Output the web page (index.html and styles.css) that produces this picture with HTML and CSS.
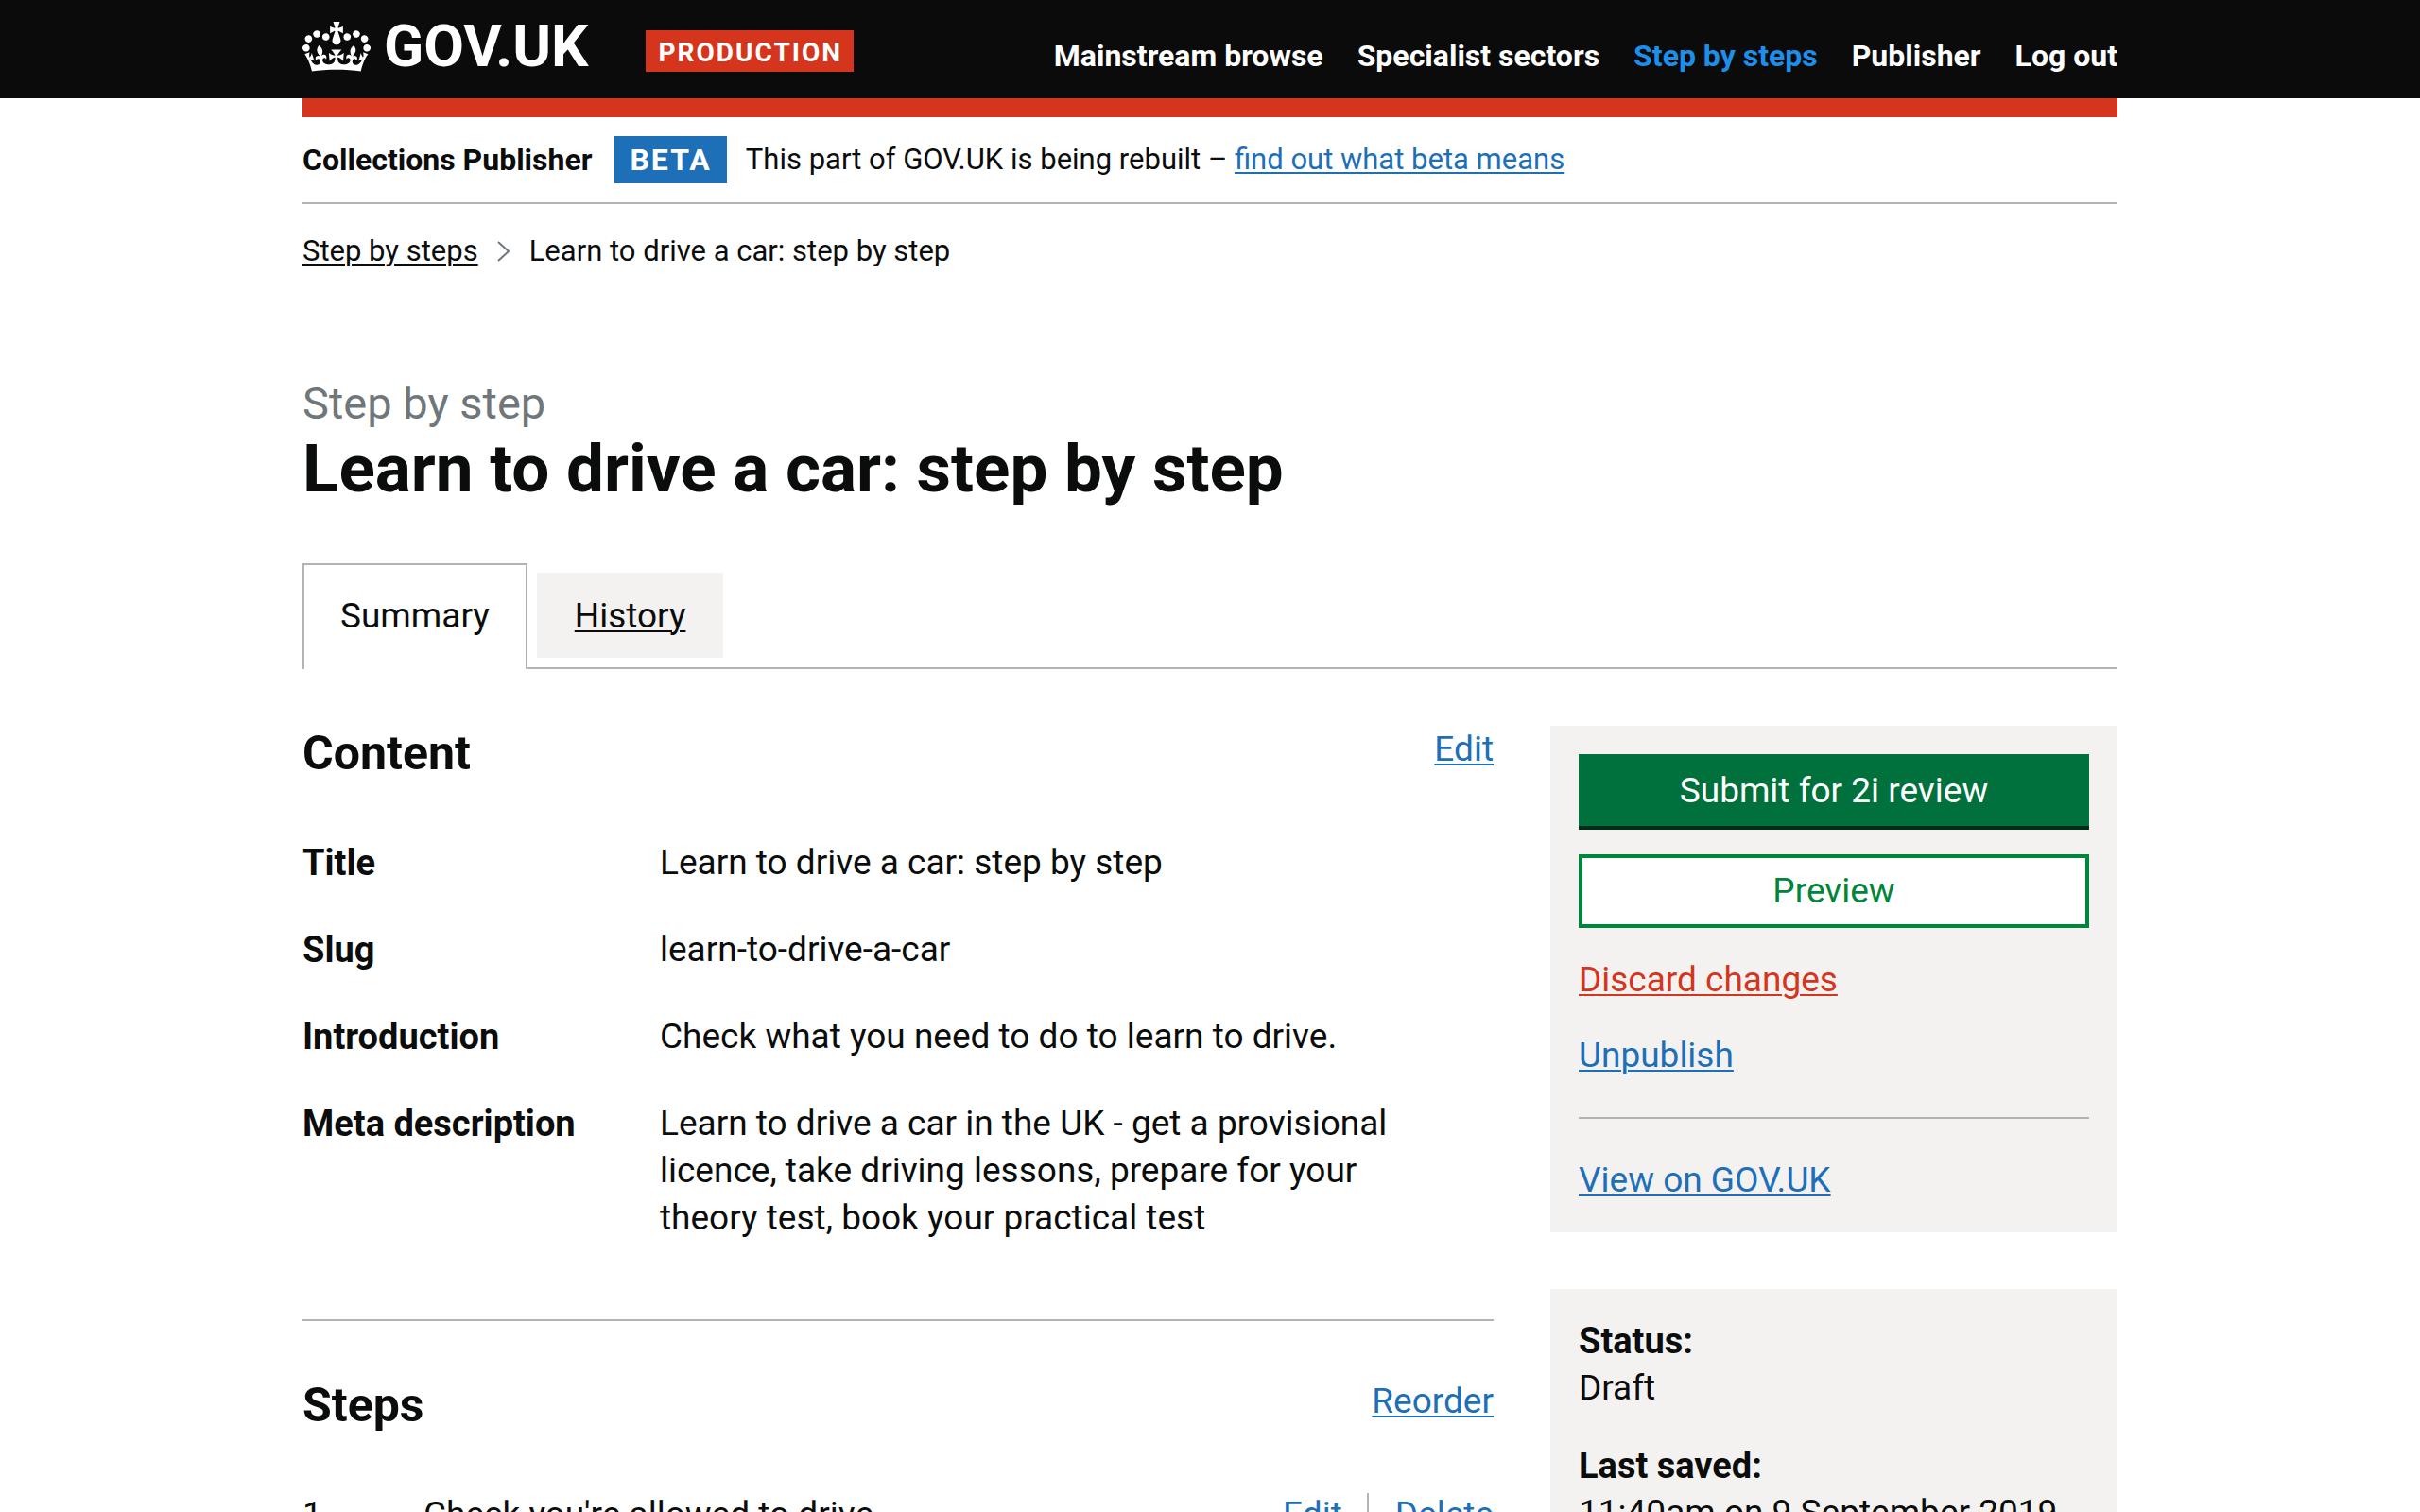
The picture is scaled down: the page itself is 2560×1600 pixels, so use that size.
FILE: index.html
```html
<!DOCTYPE html>
<html lang="en">
<head>
<meta charset="utf-8">
<meta name="viewport" content="width=device-width, initial-scale=1">
<title>Learn to drive a car: step by step</title>
<link rel="stylesheet" href="styles.css">
</head>
<body>
<header class="header">
  <div class="container header__inner">
    <a class="logo" href="#">
      <svg class="logo__crown" viewBox="0 0 132 97" aria-hidden="true"><path fill="currentColor" fill-rule="evenodd" d="M25 30.2c3.5 1.5 7.7-.2 9.1-3.7 1.5-3.6-.2-7.8-3.9-9.2-3.6-1.4-7.6.3-9.1 3.9-1.4 3.5.3 7.5 3.9 9zM9 39.5c3.6 1.5 7.8-.2 9.2-3.7 1.5-3.6-.2-7.8-3.9-9.1-3.6-1.5-7.6.2-9.1 3.8-1.4 3.5.3 7.5 3.8 9zM4.4 57.2c3.5 1.5 7.7-.2 9.1-3.8 1.5-3.6-.2-7.7-3.9-9.1-3.5-1.5-7.6.3-9.1 3.8-1.4 3.5.3 7.6 3.9 9.1zm38.3-21.4c3.5 1.5 7.7-.2 9.1-3.8 1.5-3.6-.2-7.7-3.9-9.1-3.6-1.5-7.6.3-9.1 3.8-1.3 3.6.4 7.7 3.9 9.1zm64.4-5.6c-3.6 1.5-7.8-.2-9.1-3.7-1.5-3.6.2-7.8 3.8-9.2 3.6-1.4 7.7.3 9.2 3.9 1.3 3.5-.4 7.5-3.9 9zm15.9 9.3c-3.6 1.5-7.7-.2-9.1-3.7-1.5-3.6.2-7.8 3.7-9.1 3.6-1.5 7.7.2 9.2 3.8 1.5 3.5-.3 7.5-3.8 9zm4.7 17.7c-3.6 1.5-7.8-.2-9.2-3.8-1.5-3.6.2-7.7 3.9-9.1 3.6-1.5 7.7.3 9.2 3.8 1.3 3.5-.4 7.6-3.9 9.1zM89.3 35.8c-3.6 1.5-7.8-.2-9.2-3.8-1.4-3.6.2-7.7 3.9-9.1 3.6-1.5 7.7.3 9.2 3.8 1.4 3.6-.3 7.7-3.9 9.1zM69.7 17.7l8.9 4.7V9.3l-8.9 2.8c-.2-.3-.5-.6-.9-.9L72.4 0H59.6l3.5 11.2c-.3.3-.6.5-.9.9l-8.8-2.8v13.1l8.8-4.7c.3.3.6.7.9.9l-5 15.4v.1c-.2.8-.4 1.6-.4 2.4 0 4.1 3.1 7.5 7 8.1h.2c.3 0 .7.1 1 .1.4 0 .7 0 1-.1h.2c4-.6 7.1-4.1 7.1-8.1 0-.8-.1-1.7-.4-2.4V34l-5.1-15.4c.4-.2.7-.6 1-.9zM66 92.8c16.9 0 32.8 1.1 47.1 3.2 4-16.9 8.9-26.7 14-33.5l-9.6-3.4c1 4.9 1.1 7.2 0 10.2-1.5-1.4-3-4.3-4.2-8.7L108.6 76c2.8-2 5-3.2 7.5-3.3-4.4 9.4-10 11.9-13.6 11.2-4.3-.8-6.3-4.6-5.6-7.9 1-4.7 5.7-5.9 8-.5 4.3-8.7-3-11.4-7.6-8.8 7.1-7.2 7.9-13.5 2.1-21.1-8 6.1-8.1 12.3-4.5 20.8-4.7-5.4-12.1-2.5-9.5 6.2 3.4-5.2 7.9-2 7.2 3.1-.6 4.3-6.4 7.8-13.5 7.2-10.3-.9-10.9-8-11.2-13.8 2.5-.5 7.1 1.8 11 7.3L80.2 60c-4.1 4.4-8 5.3-12.3 5.4 1.4-4.4 8-11.6 8-11.6H55.5s6.4 7.2 7.9 11.6c-4.2-.1-8-1-12.3-5.4l1.4 16.4c3.9-5.5 8.5-7.7 10.9-7.3-.3 5.8-.9 12.8-11.1 13.8-7.2.6-12.9-2.9-13.5-7.2-.7-5 3.8-8.3 7.1-3.1 2.7-8.7-4.6-11.6-9.4-6.2 3.7-8.5 3.6-14.7-4.6-20.8-5.8 7.6-5 13.9 2.2 21.1-4.7-2.6-11.9.1-7.7 8.8 2.3-5.5 7.1-4.2 8.1.5.7 3.3-1.3 7.1-5.7 7.9-3.5.7-9-1.8-13.5-11.2 2.5.1 4.7 1.3 7.5 3.3l-4.7-15.4c-1.2 4.4-2.7 7.2-4.3 8.7-1.1-3-.9-5.3 0-10.2l-9.5 3.4c5 6.9 9.9 16.7 14 33.5 14.8-2.1 30.8-3.2 47.7-3.2z"/></svg>
      <span class="logo__text">GOV.UK</span>
    </a>
    <strong class="tag tag--environment">PRODUCTION</strong>
    <nav class="nav" aria-label="Main">
      <a class="nav__link" href="#">Mainstream browse</a>
      <a class="nav__link" href="#">Specialist sectors</a>
      <a class="nav__link nav__link--active" href="#" aria-current="page">Step by steps</a>
      <a class="nav__link" href="#">Publisher</a>
      <a class="nav__link" href="#">Log out</a>
    </nav>
  </div>
</header>

<div class="container">
  <div class="environment-bar"></div>
  <div class="phase-banner">
    <strong class="phase-banner__product">Collections Publisher</strong>
    <strong class="tag tag--phase">BETA</strong>
    <span class="phase-banner__text">This part of GOV.UK is being rebuilt – <a class="link" href="#">find out what beta means</a></span>
  </div>

  <nav class="breadcrumbs" aria-label="Breadcrumb">
    <a class="breadcrumbs__link" href="#">Step by steps</a>
    <svg class="breadcrumbs__arrow" viewBox="0 0 14 22" aria-hidden="true"><path d="M1 1l11 10L1 21" fill="none" stroke="currentColor" stroke-width="2"/></svg>
    <span>Learn to drive a car: step by step</span>
  </nav>

  <main>
    <div class="title">
      <span class="title__context">Step by step</span>
      <h1 class="title__text">Learn to drive a car: step by step</h1>
    </div>

    <ul class="tabs">
      <li class="tabs__item tabs__item--selected"><a class="tabs__link" href="#summary" aria-current="true">Summary</a></li>
      <li class="tabs__item"><a class="tabs__link" href="#history">History</a></li>
    </ul>

    <div class="layout" id="summary">
      <div class="layout__main">
        <section class="section">
          <div class="section__head">
            <h2 class="section__title">Content</h2>
            <a class="link" href="#">Edit</a>
          </div>
          <dl class="summary">
            <div class="summary__row"><dt>Title</dt><dd>Learn to drive a car: step by step</dd></div>
            <div class="summary__row"><dt>Slug</dt><dd>learn-to-drive-a-car</dd></div>
            <div class="summary__row"><dt>Introduction</dt><dd>Check what you need to do to learn to drive.</dd></div>
            <div class="summary__row"><dt>Meta description</dt><dd>Learn to drive a car in the UK - get a provisional licence, take driving lessons, prepare for your theory test, book your practical test</dd></div>
          </dl>
        </section>
        <section class="section">
          <div class="section__head">
            <h2 class="section__title">Steps</h2>
            <a class="link" href="#">Reorder</a>
          </div>
          <ol class="steps">
            <li class="steps__row">
              <span class="steps__number">1</span>
              <span class="steps__name">Check you're allowed to drive</span>
              <span class="steps__actions"><a class="link" href="#">Edit</a><a class="link steps__delete" href="#">Delete</a></span>
            </li>
          </ol>
        </section>
      </div>

      <aside class="sidebar">
        <div class="panel">
          <div class="panel__buttons">
            <button class="button" type="button">Submit for 2i review</button>
            <button class="button button--secondary" type="button">Preview</button>
          </div>
          <ul class="panel__links">
            <li><a class="link link--destructive" href="#">Discard changes</a></li>
            <li><a class="link" href="#">Unpublish</a></li>
          </ul>
          <p class="panel__footer"><a class="link" href="#">View on GOV.UK</a></p>
        </div>
        <dl class="panel panel--status">
          <div><dt>Status:</dt><dd>Draft</dd></div>
          <div><dt>Last saved:</dt><dd>11:40am on 9 September 2019</dd></div>
        </dl>
      </aside>
    </div>
  </main>
</div>
</body>
</html>
```
FILE: styles.css
```css
:root {
  --text: #0b0c0c;
  --link: #1d70b8;
  --border: #b1b4b6;
  --panel: #f3f2f1;
  --red: #d4351c;
}

* { box-sizing: border-box; }

body {
  margin: 0;
  background: #fff;
  color: var(--text);
  font: 37px/50px Roboto, "Liberation Sans", sans-serif;
}

h1, h2, p, ul, ol, dl, dd { margin: 0; padding: 0; }
ul, ol { list-style: none; }
dt {
  font-size: 38px;
  font-weight: 700;
}

.container {
  width: 75%;
  margin: 0 auto;
}

.link,
.breadcrumbs__link,
.tabs__link {
  text-decoration: underline;
  text-decoration-thickness: 2px;
  text-underline-offset: 3px;
}
.link { color: var(--link); }
.link--destructive { color: var(--red); }

/* Header */
.header {
  background: #0b0b0b;
  color: #fff;
}
.header__inner {
  display: flex;
  align-items: flex-start;
  padding: 18px 0 24px;
}
.logo {
  display: flex;
  gap: 14px;
  color: #fff;
  text-decoration: none;
}
.logo__crown {
  width: 72px;
  height: 53px;
  margin-top: 5px;
}
.logo__text {
  font-size: 62px;
  font-weight: 700;
  line-height: 62px;
}
.tag {
  color: #fff;
  font-weight: 700;
  letter-spacing: 2px;
}
.tag--environment {
  margin: 14px 0 0 60px;
  padding: 4px 12px 0 14px;
  background: var(--red);
  font-size: 28px;
  line-height: 40px;
}
.nav {
  display: flex;
  gap: 36px;
  margin-left: auto;
  padding-top: 21px;
  font-size: 32px;
  line-height: 40px;
}
.nav__link {
  color: #fff;
  font-weight: 700;
  text-decoration: none;
}
.nav__link--active { color: #1d8feb; }

.environment-bar {
  height: 20px;
  background: var(--red);
}

/* Phase banner and breadcrumbs */
.phase-banner {
  display: flex;
  align-items: flex-start;
  padding: 20px 0;
  border-bottom: 2px solid var(--border);
}
.phase-banner__product { font-size: 32px; }
.tag--phase {
  margin: 0 20px 0 24px;
  padding: 0 16px;
  background: var(--link);
  font-size: 32px;
}
.phase-banner__text { font-size: 31px; }

.breadcrumbs {
  display: flex;
  align-items: center;
  gap: 20px;
  padding-top: 30px;
  font-size: 31px;
  line-height: 40px;
}
.breadcrumbs__link { color: inherit; }
.breadcrumbs__arrow {
  width: 14px;
  height: 22px;
  color: #6f777b;
}

/* Title */
.title { padding: 112px 0 60px; }
.title__context {
  display: block;
  color: #6f777b;
  font-size: 47px;
  line-height: 58px;
}
.title__text {
  font-size: 71px;
  line-height: 80px;
}

/* Tabs */
.tabs {
  display: flex;
  gap: 10px;
  border-bottom: 2px solid var(--border);
  line-height: 48px;
}
.tabs__item {
  margin: 10px 0;
  padding: 22px 40px 20px;
  background: var(--panel);
}
.tabs__item--selected {
  margin: 0 0 -2px;
  padding: 30px 38px 32px;
  border: 2px solid var(--border);
  border-bottom: 0;
  background: #fff;
}
.tabs__link { color: inherit; }
.tabs__item--selected .tabs__link { text-decoration: none; }

/* Two-column layout */
.layout {
  display: grid;
  grid-template-columns: 21fr 10fr;
  gap: 60px;
  padding-top: 60px;
}

.section + .section {
  margin-top: 62px;
  padding-top: 60px;
  border-top: 2px solid var(--border);
}
.section__head {
  display: flex;
  justify-content: space-between;
  align-items: flex-start;
  margin-bottom: 40px;
}
.section__title {
  font-size: 50px;
  line-height: 58px;
}

.summary__row {
  display: grid;
  grid-template-columns: 3fr 7fr;
  padding: 22px 0 20px;
}
.summary__row dd { padding-right: 80px; }

.steps__row {
  display: flex;
  padding: 24px 0;
  line-height: 46px;
}
.steps__number { width: 128px; }
.steps__actions {
  display: flex;
  margin-left: auto;
}
.steps__delete {
  margin-left: 26px;
  padding-left: 28px;
  border-left: 2px solid var(--border);
}

/* Sidebar */
.sidebar {
  display: flex;
  flex-direction: column;
  gap: 60px;
}
.panel {
  padding: 30px;
  background: var(--panel);
}
.panel__buttons {
  display: grid;
  gap: 26px;
}
.button {
  padding: 2px 0 0;
  border: 0;
  border-bottom: 4px solid #002d18;
  background: #00703c;
  color: #fff;
  font: inherit;
  line-height: 74px;
}
.button--secondary {
  padding: 0;
  border: 4px solid #00853c;
  background: #fff;
  color: #00853c;
  line-height: 70px;
}
.panel__links {
  display: grid;
  gap: 30px;
  padding: 30px 0 40px;
}
.panel__footer {
  padding-top: 40px;
  border-top: 2px solid var(--border);
}
.panel--status {
  display: grid;
  gap: 32px;
}
```
